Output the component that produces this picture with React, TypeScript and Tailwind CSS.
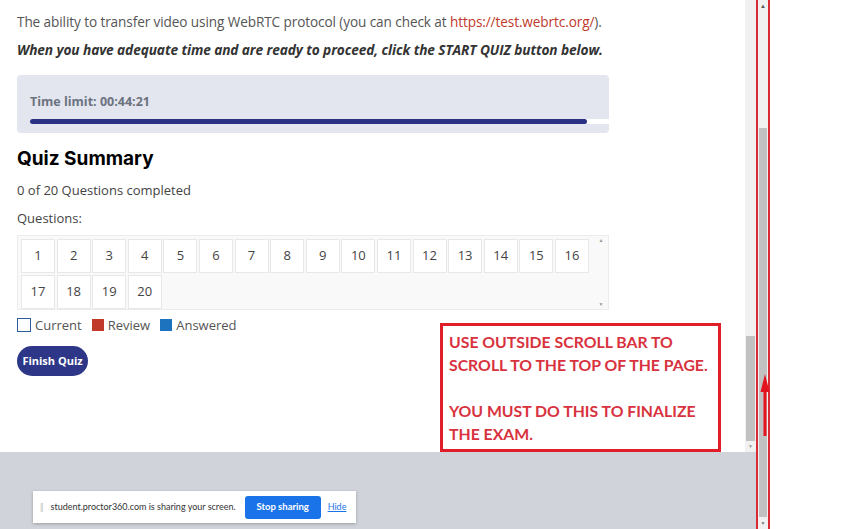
import React from 'react';

const questions = Array.from({ length: 20 }, (_, i) => i + 1);

function QuestionCell({ n }: { n: number }) {
  return (
    <li className="w-[34px] h-[34px] flex items-center justify-center bg-white border border-[#e8e8e8] text-[13px] text-[#444]">
      {n}
    </li>
  );
}

function InnerScrollbar() {
  return (
    <div className="w-[11px] bg-[#f1f1f1] flex flex-col">
      <div className="h-[336px]" />
      <div className="mx-[1px] h-[105px] bg-[#c1c1c1]" />
      <div className="h-[11px] flex items-center justify-center text-[5px] text-[#999] leading-none">▼</div>
    </div>
  );
}

function OuterScrollbar() {
  return (
    <div className="relative w-[14px] border-x-2 border-[#d92b34] bg-[#f1f1f1] flex flex-col">
      <div className="h-[12px] flex items-center justify-center text-[6px] text-[#555] leading-none">▲</div>
      <div className="h-[116px]" />
      <div className="mx-[1px] flex-1 bg-[#c1c1c1]" />
      <div className="h-[12px] flex items-center justify-center text-[5px] text-[#777] leading-none">▼</div>
      <svg className="absolute left-[2px] top-[372px]" width="10" height="66" viewBox="0 0 10 66">
        <path d="M5 2 L9.5 20 L6.5 20 L6.5 64 L3.5 64 L3.5 20 L0.5 20 Z" fill="#e3141f" />
      </svg>
    </div>
  );
}

export default function App() {
  return (
    <div className="w-[841px] h-[529px] overflow-hidden flex bg-white" style={{ fontFamily: '"Open Sans", sans-serif' }}>
      <div className="w-[756px] flex flex-col">
        <div className="h-[452px] flex">
          <div className="relative flex-1 bg-white pl-[17px] pr-[120px] overflow-hidden">
            <p className="mt-[13px] text-[13.6px] leading-[18px] text-[#555] tracking-[-0.1px] whitespace-nowrap">
              The ability to transfer video using WebRTC protocol (you can check at{' '}
              <a className="text-[#c0392b]">https://test.webrtc.org/</a>).
            </p>
            <p className="mt-[10px] text-[13.7px] leading-[18px] font-bold italic text-[#333] tracking-[-0.1px] whitespace-nowrap">
              When you have adequate time and are ready to proceed, click the START QUIZ button below.
            </p>

            <div className="mt-[16px] w-[592px] h-[58px] rounded-[4px] bg-[#e3e6ee] pl-[13px] pt-[19px]">
              <div className="text-[12.5px] font-bold text-[#6b7280] leading-[16px]">Time limit: 00:44:21</div>
              <div className="mt-[9px] h-[5px] bg-white rounded-l-full">
                <div className="h-full w-[557px] rounded-full bg-[#2b3284]" />
              </div>
            </div>

            <h2 className="mt-[14px] text-[19px] leading-[24px] font-bold text-black" style={{ fontFamily: 'Inter, sans-serif' }}>
              Quiz Summary
            </h2>
            <p className="mt-[10px] text-[13px] leading-[18px] text-[#444]">0 of 20 Questions completed</p>
            <p className="mt-[10px] text-[13px] leading-[18px] text-[#444]">Questions:</p>

            <div className="mt-[8px] w-[592px] h-[75px] flex bg-[#f9f9f9] border border-[#ececec]">
              <ul className="flex-1 flex flex-wrap content-start gap-[1.6px] pl-[3px] pt-[3px]">
                {questions.map((n) => (
                  <QuestionCell key={n} n={n} />
                ))}
              </ul>
              <div className="w-[14px] flex flex-col justify-between items-center py-[2px] text-[5px] text-[#999] leading-none">
                <span>▲</span>
                <span>▼</span>
              </div>
            </div>

            <div className="mt-[6px] flex items-center gap-[4px] text-[13px] text-[#555] leading-[18px]">
              <span className="w-[14px] h-[14px] border border-[#2d5d9f] bg-white" />
              <span className="mr-[6px]">Current</span>
              <span className="w-[12px] h-[12px] bg-[#c0392b]" />
              <span className="mr-[6px]">Review</span>
              <span className="w-[12px] h-[12px] bg-[#1e73be]" />
              <span>Answered</span>
            </div>

            <button
              type="button"
              className="mt-[12px] w-[71px] h-[30px] rounded-full bg-[#2e3787] text-white text-[11px] font-bold"
            >
              Finish Quiz
            </button>

            <div
              className="absolute left-[440px] top-[323px] w-[281px] h-[129px] border-[3px] border-[#e01e2a] bg-white pl-[6px] pt-[4px] text-[15.8px] leading-[23px] font-bold text-[#d8323e] whitespace-nowrap"
              style={{ fontFamily: 'Lato, sans-serif' }}
            >
              <p>USE OUTSIDE SCROLL BAR TO</p>
              <p>SCROLL TO THE TOP OF THE PAGE.</p>
              <p>&nbsp;</p>
              <p>YOU MUST DO THIS TO FINALIZE</p>
              <p>THE EXAM.</p>
            </div>
          </div>
          <InnerScrollbar />
        </div>

        <div className="flex-1 bg-[#d0d4da] pl-[33px] pt-[39px]">
          <div className="w-[323px] h-[32px] bg-white shadow-[0_1px_3px_rgba(0,0,0,0.25)] flex items-center pl-[7px] text-[9px] text-[#333] whitespace-nowrap" style={{ fontFamily: 'Lato, sans-serif' }}>
            <span className="text-[#bbb] tracking-[-1px] mr-[8px]">||</span>
            <span>student.proctor360.com is sharing your screen.</span>
            <button type="button" className="ml-[9px] w-[76px] h-[23px] rounded-[3px] bg-[#1a73e8] text-white text-[9.5px] font-bold">
              Stop sharing
            </button>
            <a className="ml-[7px] underline text-[#1a73e8]">Hide</a>
          </div>
        </div>
      </div>
      <OuterScrollbar />
      <div className="flex-1 bg-white" />
    </div>
  );
}
